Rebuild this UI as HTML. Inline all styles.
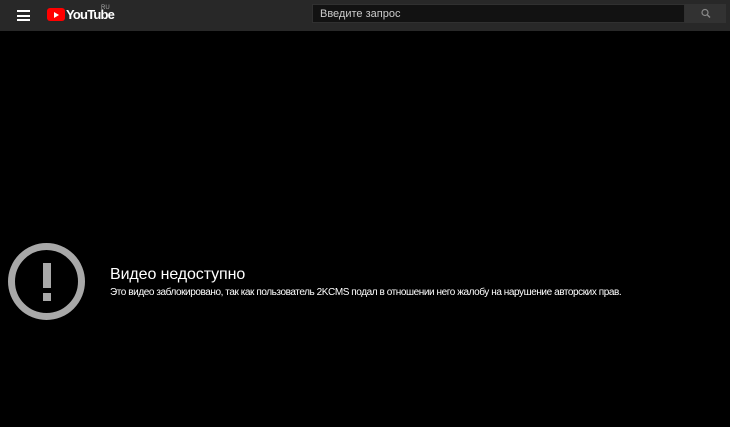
<!DOCTYPE html>
<html><head><meta charset="utf-8"><style>
html,body{margin:0;padding:0;width:730px;height:427px;background:#000;overflow:hidden;font-family:"Liberation Sans",sans-serif}
.hdr{position:absolute;left:0;top:0;width:730px;height:31px;background:#282828}
.burger{position:absolute;left:17px;top:10px;width:13px}
.burger div{height:2px;background:#fff;margin-bottom:2.5px}
.logo{position:absolute;left:47px;top:8px;width:18px;height:13px;background:#f00;border-radius:3px}
.logo:after{content:"";position:absolute;left:7px;top:3.5px;border-left:5px solid #fff;border-top:3px solid transparent;border-bottom:3px solid transparent}
.yt{position:absolute;left:66px;top:7px;color:#fff;font-size:13px;font-weight:bold;letter-spacing:-0.8px}
.ru{position:absolute;left:101px;top:5px;color:#aaa;font-size:6px}
.search{position:absolute;left:312px;top:4px;width:373px;height:19px;background:#121212;border:1px solid #303030;box-sizing:border-box}
.search span{position:absolute;left:7px;top:3px;color:#ccc;font-size:11px}
.btn{position:absolute;left:685px;top:4px;width:41px;height:19px;background:#323232}
.t1{position:absolute;left:110px;top:266px;color:#fff;font-size:16px;letter-spacing:-0.1px}
.t2{position:absolute;left:110px;top:287px;color:#fff;font-size:10px;letter-spacing:-0.43px;white-space:nowrap}
</style></head><body>
<div class="hdr">
<div class="burger"><div></div><div></div><div></div></div>
<div class="logo"></div><div class="yt">YouTube</div><div class="ru">RU</div>
<div class="search"><span>Введите запрос</span></div>
<div class="btn"><svg width="41" height="19" viewBox="0 0 41 19"><circle cx="20" cy="8.5" r="3" fill="none" stroke="#888" stroke-width="1.2"/><line x1="22.2" y1="10.7" x2="25" y2="13.5" stroke="#888" stroke-width="1.4"/></svg></div>
</div>
<svg style="position:absolute;left:0;top:235px" width="95" height="95" viewBox="0 235 95 95">
<circle cx="46.5" cy="281.5" r="35" fill="none" stroke="#a8a8a8" stroke-width="7"/>
<rect x="43" y="263" width="8" height="25" fill="#a8a8a8"/>
<rect x="43" y="293" width="8" height="8" fill="#a8a8a8"/>
</svg>
<div class="t1">Видео недоступно</div>
<div class="t2">Это видео заблокировано, так как пользователь 2KCMS подал в отношении него жалобу на нарушение авторских прав.</div>
</body></html>
